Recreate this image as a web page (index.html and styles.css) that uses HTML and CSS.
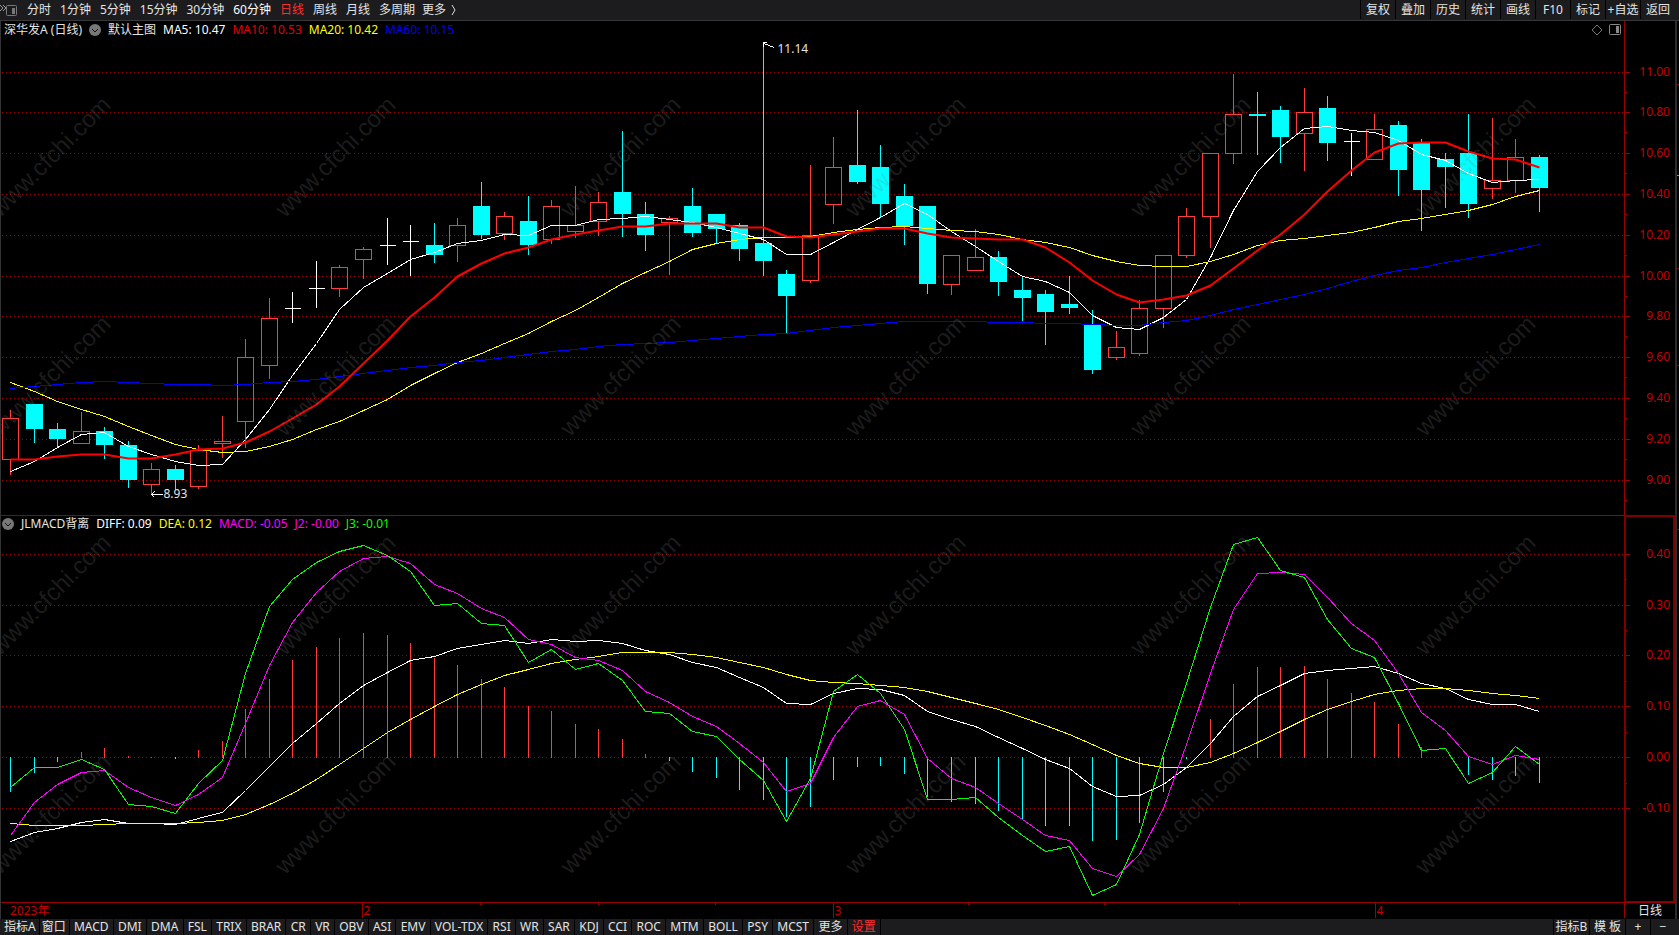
FILE: index.html
```html
<!DOCTYPE html>
<html lang="zh-CN">
<head>
<meta charset="utf-8">
<title>深华发A (日线)</title>
<link rel="stylesheet" href="styles.css">
</head>
<body>
<div class="app">
  <header class="topbar">
    <nav class="periods">
      <button class="period collapse" aria-label="展开">
        <svg width="18" height="14" viewBox="0 0 18 14" fill="none" stroke="#777"><path d="M0 2l3 3-3 3M3 2l3 3-3 3" stroke="#999"/><rect x="6.500" y="2.500" width="10" height="10" rx="1"/><rect x="12" y="5" width="3" height="6" fill="#777" stroke="none"/></svg>
      </button>
      <button class="period">分时</button>
      <button class="period">1分钟</button>
      <button class="period">5分钟</button>
      <button class="period">15分钟</button>
      <button class="period">30分钟</button>
      <button class="period strong">60分钟</button>
      <button class="period active">日线</button>
      <button class="period">周线</button>
      <button class="period">月线</button>
      <button class="period">多周期</button>
      <button class="period more">更多 <svg width="6" height="12" viewBox="0 0 6 12" fill="none" stroke="#ddd"><path d="M1 1l3 5-3 5"/></svg></button>
    </nav>
    <div class="tools">
      <button class="tool">复权</button>
      <button class="tool">叠加</button>
      <button class="tool">历史</button>
      <button class="tool">统计</button>
      <button class="tool">画线</button>
      <button class="tool">F10</button>
      <button class="tool">标记</button>
      <button class="tool">+自选</button>
      <button class="tool">返回</button>
    </div>
  </header>

  <section class="panel price">
    <svg class="plot" id="price" role="img" aria-label="K线图"></svg>
    <div class="legend">
      <span>深华发A (日线)</span>
      <button class="fold" aria-label="折叠主图"><svg width="12" height="12" viewBox="0 0 12 12"><circle cx="6" cy="6" r="6" fill="#777"/><path d="M3 5l3 3 3-3" fill="none" stroke="#111"/></svg></button>
      <span>默认主图</span>
      <span class="white">MA5: 10.47</span>
      <span class="ma10">MA10: 10.53</span>
      <span class="yellow">MA20: 10.42</span>
      <span class="blue">MA60: 10.15</span>
      <span class="view-icons">
        <svg width="12" height="12" viewBox="0 0 12 12" fill="none" stroke="#777"><path d="M6 1l5 5-5 5-5-5z"/></svg>
        <svg width="12" height="12" viewBox="0 0 12 12" fill="none" stroke="#888"><rect x=".5" y=".5" width="11" height="10" rx="1"/><rect x="7" y="2" width="3" height="7" fill="#888" stroke="none"/></svg>
      </span>
    </div>
  </section>

  <section class="panel macd">
    <svg class="plot" id="macd" role="img" aria-label="MACD"></svg>
    <div class="legend">
      <button class="fold" aria-label="折叠指标"><svg width="12" height="12" viewBox="0 0 12 12"><circle cx="6" cy="6" r="6" fill="#777"/><path d="M3 5l3 3 3-3" fill="none" stroke="#111"/></svg></button>
      <span>JLMACD背离</span>
      <span class="white">DIFF: 0.09</span>
      <span class="yellow">DEA: 0.12</span>
      <span class="magenta">MACD: -0.05</span>
      <span class="magenta">J2: -0.00</span>
      <span class="green">J3: -0.01</span>
    </div>
  </section>

  <section class="timeline"><svg class="plot" id="time" role="img" aria-label="时间轴"></svg></section>

  <footer class="bottombar">
    <nav class="tabs left">
      <button class="tab edge">指标A</button><button class="tab edge">窗口</button><button class="tab">MACD</button><button class="tab">DMI</button><button class="tab">DMA</button><button class="tab">FSL</button><button class="tab">TRIX</button><button class="tab">BRAR</button><button class="tab">CR</button><button class="tab">VR</button><button class="tab">OBV</button><button class="tab">ASI</button><button class="tab">EMV</button><button class="tab">VOL-TDX</button><button class="tab">RSI</button><button class="tab">WR</button><button class="tab">SAR</button><button class="tab">KDJ</button><button class="tab">CCI</button><button class="tab">ROC</button><button class="tab">MTM</button><button class="tab">BOLL</button><button class="tab">PSY</button><button class="tab">MCST</button><button class="tab">更多</button><button class="tab set">设置</button>
    </nav>
    <div class="tabs right">
      <button class="tab wide">指标B</button><button class="tab wide">模 板</button><button class="tab zoom">+</button><button class="tab zoom">−</button>
    </div>
  </footer>
</div>
<script src="chart.js"></script>
</body>
</html>
```

FILE: styles.css
```css
* { box-sizing: border-box; }
body {
  margin: 0;
  background: #000;
  color: #e4e4e4;
  font: 12px/16px "Noto Sans", "Noto Sans CJK SC", sans-serif;
}
button {
  margin: 0;
  padding: 0;
  border: 0;
  background: none;
  color: inherit;
  font: inherit;
  white-space: nowrap;
}
.app { display: flex; flex-direction: column; height: 100vh; overflow: hidden; }

.topbar {
  display: flex;
  justify-content: space-between;
  flex: none;
  height: 21px;
  padding-right: 4px;
  background: #1c1c1e;
  border-bottom: 1px solid #38383a;
}
.periods { display: flex; align-items: center; gap: 9px; height: 19px; }
.period { display: flex; align-items: center; }
.collapse { width: 18px; }
.more { gap: 5px; margin-left: -2px; }
.strong { color: #fff; }
.active { color: #ff3030; }
.tools { display: flex; }
.tool { width: 35px; height: 19px; border-left: 1px solid #000; }

.panel { display: grid; min-height: 0; border-left: 1px solid #333; }
.price { flex: 494 1 0; }
.macd { flex: 387 1 0; }
.timeline { display: grid; flex: none; height: 17px; border-left: 1px solid #333; }
.plot { grid-area: 1 / 1; width: 100%; height: 100%; min-height: 0; overflow: hidden; }
.legend {
  grid-area: 1 / 1;
  display: flex;
  align-items: center;
  align-self: start;
  gap: 7px;
  height: 18px;
  padding: 0 58px 0 3px;
  z-index: 1;
}
.macd .legend { padding-left: 1px; }
.fold { display: flex; }
.view-icons { display: flex; gap: 6px; margin-left: auto; }
.white { color: #fff; }
.ma10 { color: #e00000; }
.yellow { color: #ff0; }
.blue { color: #0000f0; }
.magenta { color: #f0f; }
.green { color: #0f0; }

.bottombar {
  display: flex;
  justify-content: space-between;
  flex: none;
  height: 16px;
  padding: 0 4px 0 2px;
  background: #1c1c1e;
}
.tabs { display: flex; }
.left { flex: 0 0 879px; }
.tab { flex: 1 0 auto; height: 16px; padding: 0 4px; border-right: 1px solid #000; }
.edge { flex-grow: 0; padding: 0 3px 0 2px; }
.set { color: #ff3030; }
.right .tab { flex: none; padding: 0; border-right: 0; border-left: 1px solid #000; }
.right .wide { width: 36px; }
.right .zoom { width: 25px; }

.plot line, .plot polyline, .plot rect, .plot path { shape-rendering: crispEdges; }
.plot polyline.thick { shape-rendering: auto; stroke-linejoin: round; }
.plot text { font: 12px "Noto Sans", "Noto Sans CJK SC", sans-serif; }
.plot .axis-text { fill: #c40000; text-anchor: end; }
.plot .date-text { fill: #c40000; }
.plot .note { fill: #e4e4e4; }
.plot .mark { font: 24px "Liberation Sans", Arial, sans-serif; fill: rgba(128, 128, 128, .22); }
```

FILE: chart.js
```js
// Candles: [high, body top, body bottom, low, kind]; r rising, c falling, w doji
const candles = [
[409,418,459,474,'r'],[404,404,429,443,'c'],[423,429,439,448,'c'],[411,431,443,443,'r'],[427,431,445,459,'c'],
[441,445,480,488,'c'],[462,469,484,493,'r'],[465,469,480,490,'c'],[444,450,486,488,'r'],[415,441,443,457,'r'],
[338,357,421,447,'r'],[297,318,365,378,'r'],[292,308,308,323,'w'],[261,288,288,308,'w'],[264,267,288,296,'r'],
[246,249,259,278,'r'],[218,245,245,265,'w'],[225,241,241,276,'w'],[223,245,255,263,'c'],[217,225,245,261,'r'],
[182,206,235,239,'c'],[211,216,233,239,'r'],[196,221,245,255,'c'],[199,206,239,243,'r'],[185,225,231,237,'r'],
[191,202,221,235,'r'],[131,192,214,237,'c'],[202,214,235,251,'c'],[215,218,222,274,'r'],[188,206,233,237,'c'],
[214,214,229,243,'c'],[223,225,249,261,'c'],[43,243,261,276,'c'],[270,274,296,333,'c'],[164,235,280,282,'r'],
[136,167,204,223,'r'],[110,165,182,184,'c'],[145,167,204,218,'c'],[184,196,226,245,'c'],[206,206,284,294,'c'],
[254,255,284,294,'r'],[228,257,270,270,'r'],[251,257,282,296,'c'],[276,290,298,321,'c'],[290,294,312,345,'c'],
[276,304,308,314,'c'],[310,325,370,374,'c'],[330,347,357,359,'r'],[299,308,353,355,'r'],[254,255,308,327,'r'],
[207,216,255,257,'r'],[153,153,216,247,'r'],[73,114,153,163,'r'],[92,114,116,155,'c'],[106,110,137,163,'c'],
[87,112,133,170,'r'],[96,108,143,161,'c'],[133,141,141,176,'w'],[113,129,159,159,'r'],[121,125,170,196,'c'],
[139,143,190,231,'c'],[153,159,167,208,'c'],[114,153,204,218,'c'],[117,180,188,198,'r'],[138,157,180,192,'r'],
[155,157,188,212,'c']];
const ma5 = [471,461,447,434,432,446,454,461,465,464,439,409,375,343,309,287,273,259,252,243,240,234,235,225,225,219,218,216,219,222,227,233,239,254,254,242,229,217,203,214,231,246,261,276,281,292,315,327,329,317,299,257,210,171,147,128,126,130,132,140,154,160,173,182,180,179];
const ma10 = [459,459,456,454,454,458,458,454,449,448,442,431,418,404,386,363,340,316,297,276,263,253,247,239,234,230,226,226,223,223,223,227,227,236,237,234,231,228,228,233,237,238,239,239,247,262,280,294,302,299,295,285,268,250,234,214,191,170,152,143,142,142,151,158,159,167];
const ma20 = [382,391,401,409,416,426,435,444,449,452,451,446,439,429,421,410,399,385,373,362,353,343,333,321,310,297,283,272,261,249,243,239,237,237,236,232,229,227,226,228,230,231,234,239,242,247,255,261,265,266,266,261,254,245,240,238,235,232,227,221,218,214,210,204,196,190];
const ma60 = [388,386,384,382,381,382,383,384,384,385,384,382,381,379,376,373,370,367,365,362,360,357,354,351,349,346,344,343,342,340,338,336,334,333,330,327,325,323,321,321,321,321,322,322,323,323,324,325,325,322,320,315,309,304,299,294,288,281,275,270,267,262,258,254,249,244];
const bars = [791,772,761,752,748,756,757,758,750,741,709,679,660,647,638,633,635,643,658,665,679,687,706,711,724,729,739,754,760,771,777,789,799,816,806,779,766,765,773,796,801,803,810,818,825,825,840,839,822,791,758,719,684,667,667,666,679,693,702,724,747,757,774,779,775,782];
const diff = [841,832,828,822,819,823,823,824,818,812,790,766,743,723,703,685,672,660,656,648,644,640,643,639,641,640,643,650,654,662,667,677,687,703,704,693,688,689,695,711,719,726,737,748,759,768,786,796,795,784,767,743,716,696,685,673,670,668,666,673,683,688,699,704,704,711];
const dea = [823,825,825,825,824,823,823,823,822,820,814,804,793,779,764,748,732,719,706,694,684,675,669,663,659,656,652,652,652,654,657,662,667,674,680,682,683,685,687,691,697,703,709,717,725,734,744,755,763,767,767,762,753,742,731,719,709,701,694,690,688,688,690,693,695,698];
const j2 = [835,802,784,772,770,787,797,805,794,777,723,665,622,592,571,558,556,563,584,593,608,617,639,644,657,660,670,691,702,716,726,743,762,791,783,737,706,700,714,758,778,787,803,819,835,840,868,876,854,808,744,673,609,573,572,574,597,623,640,673,712,730,756,764,755,759];
const j3 = [787,767,767,759,769,804,806,813,783,760,673,606,579,562,551,545,555,571,605,603,623,625,662,649,669,663,680,711,713,731,736,759,780,821,778,691,674,693,729,799,799,797,817,835,851,846,895,884,834,753,683,607,544,537,570,577,619,648,657,703,750,748,783,772,746,764];

const RIGHT = 55;
const RED = '#ff3c3c', CYAN = '#0ff', AXIS = '#900';

function surface(id, top, height) {
  const el = document.getElementById(id);
  const { width: w, height: h } = el.getBoundingClientRect();
  const axis = Math.round(w - RIGHT) + .5;
  const sx = axis / 1623.5, out = [];
  const s = {
    w, h, axis, sx, out,
    x: i => Math.round((9.2 + i * 23.52) * sx) + .5,
    y: v => Math.round((v - top) * h / height) + .5,
    line(x1, y1, x2, y2, c, extra = '') { out.push(`<line x1="${x1}" y1="${y1}" x2="${x2}" y2="${y2}" stroke="${c}" ${extra}/>`); },
    text(x, y, t, cls) { out.push(`<text x="${x}" y="${y}" class="${cls}">${t}</text>`); },
    curve(data, c, width = 1) { out.push(`<polyline class="${width > 1 ? 'thick' : 'thin'}" fill="none" stroke="${c}" stroke-width="${width}" points="${data.map((v, i) => s.x(i) + ',' + s.y(v)).join(' ')}"/>`); },
    grid(v, label) {
      const y = s.y(v);
      s.line(1, y, axis, y, AXIS, 'stroke-dasharray="1 3"');
      s.line(axis, y, axis + 5, y, AXIS);
      s.text(w - 9, y + 3, label, 'axis-text');
    },
    marks(rows) {
      for (const v of rows) for (let i = 0; i < 6; i++) {
        const x = (i * 285 - 1) * sx;
        out.push(`<text class="mark" transform="translate(${x} ${s.y(v)}) rotate(-45)">www.cfchi.com</text>`);
      }
    },
    edge() { out.push(`<rect x="${w - 4}" y="0" width="2" height="${h}" fill="#2c2c2e"/>`); },
    done() { el.innerHTML = out.join(''); }
  };
  return s;
}

function drawPrice() {
  const s = surface('price', 21, 494);
  const levels = [72, 112, 153, 194, 235, 276, 316, 357, 398, 439, 480];
  levels.forEach((v, i) => {
    s.grid(v, (11 - i * .2).toFixed(2));
    const y = s.y(v + 20);
    s.line(s.axis, y, s.axis + 2, y, AXIS);
  });
  candles.forEach(([hi, top, bot, lo, k], i) => {
    const x = s.x(i), c = k === 'r' ? RED : k === 'c' ? CYAN : '#fff';
    if (k === 'r') {
      s.line(x, s.y(hi), x, s.y(top), c);
      s.line(x, s.y(bot), x, s.y(lo), c);
      s.out.push(`<rect x="${x - 8}" y="${s.y(top)}" width="16" height="${s.y(bot) - s.y(top)}" fill="none" stroke="${c}"/>`);
    } else {
      s.line(x, s.y(hi) - .5, x, s.y(lo) - .5, c);
      if (k === 'c') s.out.push(`<rect x="${x - 8.5}" y="${s.y(top) - .5}" width="17" height="${s.y(bot) - s.y(top)}" fill="${c}"/>`);
      else s.line(x - 8, s.y(top), x + 8, s.y(top), c);
    }
  });
  s.curve(ma5, '#fff'); s.curve(ma20, '#ff0'); s.curve(ma60, '#00f'); s.curve(ma10, '#f00', 2);
  const hx = s.x(32), hy = s.y(43);
  s.out.push(`<path d="M${hx + 11} ${hy + 4}L${hx} ${hy}M${hx + 3} ${hy - 1}H${hx}V${hy + 3}" fill="none" stroke="#fff"/>`);
  s.text(hx + 14, hy + 9, '11.14', 'note');
  const lx = s.x(6), ly = s.y(494);
  s.out.push(`<path d="M${lx + 11} ${ly}H${lx}M${lx + 3} ${ly - 3}L${lx} ${ly}L${lx + 3} ${ly + 3}" fill="none" stroke="#fff"/>`);
  s.text(lx + 12, ly + 3, '8.93', 'note');
  s.marks([218, 437]);
  s.line(s.axis, 0, s.axis, s.h, AXIS);
  s.edge();
  for (const [v, c] of [[84, AXIS], [175, '#c80'], [268, AXIS], [365, AXIS]]) s.line(s.w - 2, s.y(v), s.w, s.y(v), c);
  s.done();
}

function drawMacd() {
  const s = surface('macd', 515, 387);
  [554, 605, 655, 706, 757, 808].forEach((v, i) => s.grid(v, (.4 - i * .1).toFixed(2).replace('-0.00', '0.00')));
  for (const v of [579, 630, 681, 732, 783]) s.line(s.axis, s.y(v), s.axis + 2, s.y(v), AXIS);
  const zero = s.y(757);
  bars.forEach((v, i) => {
    const y = s.y(v);
    if (y !== zero || i === 6) s.line(s.x(i), zero + (y < zero ? .5 : -.5), s.x(i), y + (y < zero ? -.5 : .5), v > 757 ? CYAN : RED);
  });
  s.curve(diff, '#fff'); s.curve(dea, '#ff0'); s.curve(j2, '#f0f'); s.curve(j3, '#0f0');
  s.marks([656, 875]);
  s.line(0, .5, s.w - 4, .5, AXIS);
  s.out.push(`<rect x="${s.axis + .5}" y="1" width="${s.w - 5 - s.axis - .5}" height="${s.h - 1}" fill="none" stroke="#800000" stroke-width="2"/>`);
  s.edge();
  s.line(s.w - 2, s.y(529), s.w, s.y(529), AXIS);
  s.done();
}

function drawTime() {
  const s = surface('time', 902, 17);
  s.line(0, .5, s.w - 4, .5, AXIS);
  s.text(9, 13, '2023年', 'date-text');
  for (const [px, label] of [[361, '2'], [832, '3'], [1374, '4']]) {
    const x = Math.floor(px * s.sx) + .5;
    s.line(x, 0, x, 16, AXIS);
    s.text(x + 1, 13, label, 'date-text');
  }
  for (const px of [479, 597, 714, 967, 1103, 1238]) {
    const x = Math.floor(px * s.sx) + .5;
    s.line(x, 0, x, 3, AXIS);
  }
  s.line(s.axis, 0, s.axis, 16, AXIS);
  s.text(s.w - 41, 13, '日线', 'note');
  s.edge();
  s.done();
}

function draw() { drawPrice(); drawMacd(); drawTime(); }
addEventListener('resize', draw);
draw();
```
